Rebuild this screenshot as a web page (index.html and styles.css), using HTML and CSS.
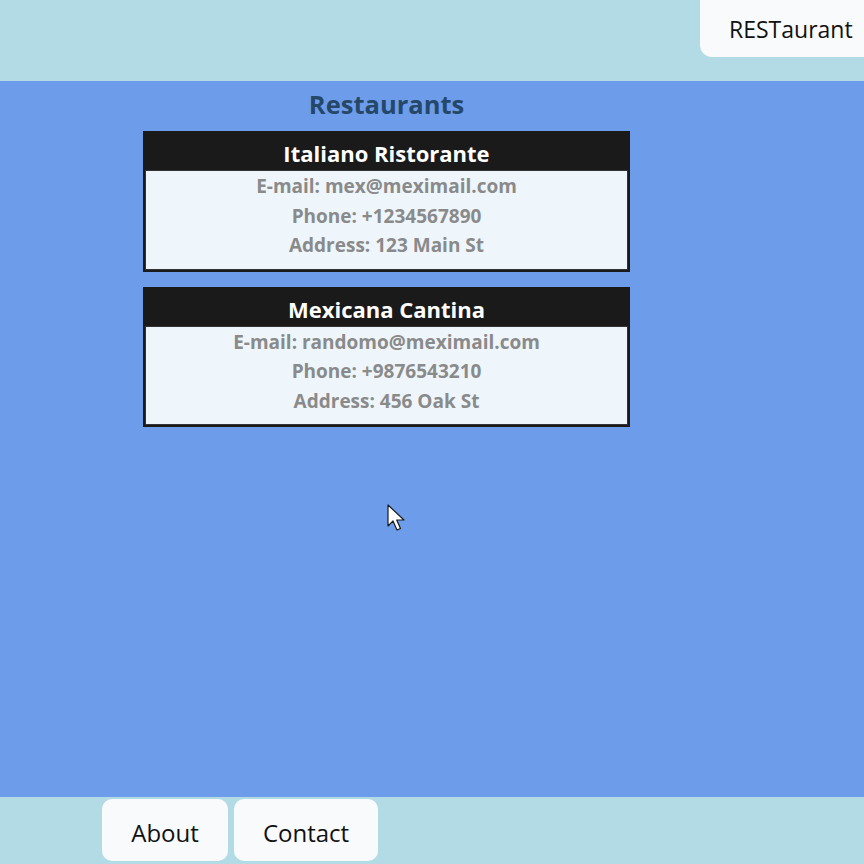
FILE: index.html
```html
<!DOCTYPE html>
<html lang="en">
<head>
<meta charset="utf-8">
<title>RESTaurant</title>
<link rel="stylesheet" href="styles.css">
</head>
<body>
<div class="page">
  <header class="topbar">
    <button class="brand">RESTaurant</button>
  </header>
  <main class="main">
    <section class="list">
      <h1 class="title">Restaurants</h1>
      <article class="card">
        <h2 class="card-name">Italiano Ristorante</h2>
        <div class="card-body">
          <p>E-mail: mex@meximail.com</p>
          <p>Phone: +1234567890</p>
          <p>Address: 123 Main St</p>
        </div>
      </article>
      <article class="card">
        <h2 class="card-name">Mexicana Cantina</h2>
        <div class="card-body">
          <p>E-mail: randomo@meximail.com</p>
          <p>Phone: +9876543210</p>
          <p>Address: 456 Oak St</p>
        </div>
      </article>
    </section>
    <svg class="cursor" width="19" height="28" viewBox="0 0 19 28"><path d="M1 1 L1 22 L6 17 L10 26 L13.5 24.5 L9.7 16 L17 16 Z" fill="#fff" stroke="#1a1a1a" stroke-width="1.2" stroke-linejoin="round"/></svg>
  </main>
  <footer class="footer">
    <button class="nav-btn about">About</button>
    <button class="nav-btn contact">Contact</button>
  </footer>
</div>
</body>
</html>
```
FILE: styles.css
```css
* { box-sizing: border-box; }
html, body { margin: 0; padding: 0; }
body {
  font-family: "Open Sans", "Noto Sans", sans-serif;
  overflow: hidden;
}
.page {
  width: 864px;
  height: 864px;
  display: flex;
  flex-direction: column;
}
.topbar {
  height: 81px;
  background: #b2dbe6;
  display: flex;
  justify-content: flex-end;
  align-items: flex-start;
}
.brand {
  font-family: inherit;
  margin: -12px -12px 0 0;
  width: 176px;
  height: 69px;
  padding: 12px 0 0 29px;
  text-align: left;
  border: none;
  border-radius: 12px;
  background: #f8fafb;
  font-size: 23px;
  font-weight: 500;
  color: #111;
}
.main {
  flex: 1;
  background: #6d9ceb;
  position: relative;
  padding: 6px 0 0 143px;
}
.list {
  width: 487px;
  display: flex;
  flex-direction: column;
  gap: 15px;
}
.title {
  margin: 0 0 -5px;
  text-align: center;
  font-size: 25.5px;
  line-height: 34px;
  font-weight: 700;
  color: #264868;
}
.card {
  border: 2px solid #1a1a1a;
  background: #1a1a1a;
}
.card-name {
  margin: 0;
  height: 37px;
  line-height: 41px;
  text-align: center;
  color: #fff;
  font-size: 22px;
  font-weight: 700;
}
.card-body {
  background: #eef5fb;
  border: 1px solid #333;
  padding: 1px 0 8px;
  text-align: center;
}
.card-body p {
  margin: 0;
  line-height: 29.5px;
  font-size: 19px;
  font-weight: 700;
  color: #8a8a8a;
}
.cursor {
  position: absolute;
  left: 387px;
  top: 423px;
}
.footer {
  height: 67px;
  background: #b2dbe6;
  display: flex;
  gap: 6px;
  padding: 2px 0 3px 102px;
}
.nav-btn {
  font-family: inherit;
  height: 62px;
  padding: 4px 0 0;
  border: none;
  border-radius: 10px;
  background: #f8fafb;
  font-size: 24px;
  font-weight: 500;
  color: #111;
}
.about { width: 126px; }
.contact { width: 144px; }
```
